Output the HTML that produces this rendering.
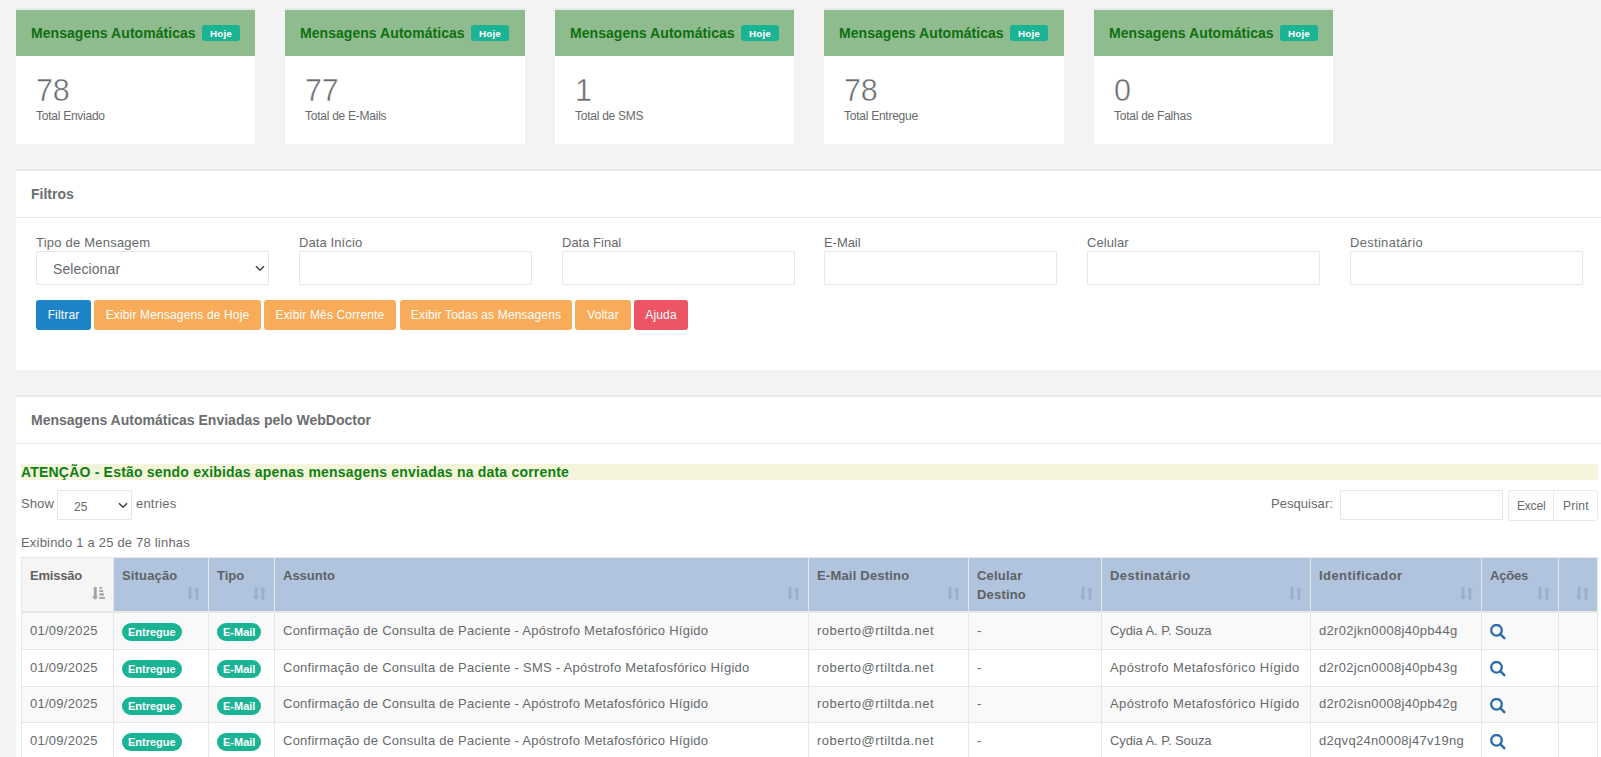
<!DOCTYPE html>
<html><head><meta charset="utf-8">
<style>
*{box-sizing:border-box}
html,body{margin:0;padding:0}
body{width:1601px;height:757px;overflow:hidden;background:#f3f3f4;position:relative;font-family:"Liberation Sans",sans-serif;color:#676a6c}
.card{position:absolute;top:8px;width:239px;height:136px;border-top:2px solid #e7eaec;background:#fff}
.card .hdr{height:46px;background:#8fbc8f;position:relative}
.card .hdr .t{position:absolute;left:15px;top:15px;font-size:14px;font-weight:bold;color:#0f700f;line-height:16px;white-space:nowrap;letter-spacing:0.05px}
.card .hdr .b{position:absolute;left:186px;top:15px;width:38px;height:16px;border-radius:3px;background:#1ab394;color:#fff;font-size:9.9px;font-weight:bold;text-align:center;line-height:18.5px;letter-spacing:0.1px}
.card .num{position:absolute;left:20px;top:64px;font-size:30.5px;line-height:32px;color:#676a6c;letter-spacing:-0.3px;-webkit-text-stroke:0.5px #fff}
.card .lbl{position:absolute;left:20px;top:100px;font-size:12px;line-height:12px;color:#676a6c;letter-spacing:-0.25px;white-space:nowrap}
.panel{position:absolute;left:16px;right:0;background:#fff;border-top:2px solid #e7eaec}
.ptitle{position:absolute;left:15px;font-size:14px;font-weight:bold;line-height:16px;white-space:nowrap;color:#6b6e70}
.sep{position:absolute;left:0;right:0;height:1px;background:#e7eaec}
.lab{position:absolute;top:64px;font-size:13px;line-height:16px;letter-spacing:0.3px;white-space:nowrap}
.inp{position:absolute;top:80px;width:233px;height:34px;border:1px solid #e5e6e7;border-radius:1px;background:#fff}
.btn{position:absolute;top:129px;height:30px;border-radius:3px;color:#fff;font-size:12px;line-height:30px;text-align:center;white-space:nowrap;letter-spacing:0.15px}
.chev{position:absolute}
table{position:absolute;left:5px;top:160px;border-collapse:collapse;table-layout:fixed;font-size:13px;letter-spacing:0.3px}
th,td{border:1px solid #e7e7e7;padding:0 8px;white-space:nowrap;overflow:hidden;text-align:left;vertical-align:top}
th{background:#b0c4de;font-weight:bold;height:54px;padding-top:8px;line-height:19px;position:relative;color:#5f6264;letter-spacing:0.2px;border-color:#e7e7e7 #e7e7e7 #e7e7e7 #e7e7e7}
thead tr{border-bottom:2px solid #e7e7e7}
td{height:36.75px;line-height:18px;vertical-align:middle}
tbody tr:nth-child(1) td{height:37.8px}
tbody tr:nth-child(2) td{height:37px}
tbody tr:nth-child(3) td{height:36.2px}
tbody tr:nth-child(odd) td{background:#f9f9f9}
.badge{display:inline-block;height:18px;line-height:18px;border-radius:9px;background:#1ab394;color:#fff;font-size:11px;font-weight:bold;padding:0 6px;letter-spacing:0;vertical-align:middle;position:relative;top:1px}
.si{position:absolute;right:8px;top:29px}
</style></head>
<body>
<div class="card" style="left:16px;width:239px"><div class="hdr"><span class="t">Mensagens Automáticas</span><span class="b">Hoje</span></div><span class="num">78</span><span class="lbl">Total Enviado</span></div>
<div class="card" style="left:285px;width:240px"><div class="hdr"><span class="t">Mensagens Automáticas</span><span class="b">Hoje</span></div><span class="num">77</span><span class="lbl">Total de E-Mails</span></div>
<div class="card" style="left:555px;width:239px"><div class="hdr"><span class="t">Mensagens Automáticas</span><span class="b">Hoje</span></div><span class="num">1</span><span class="lbl">Total de SMS</span></div>
<div class="card" style="left:824px;width:240px"><div class="hdr"><span class="t">Mensagens Automáticas</span><span class="b">Hoje</span></div><span class="num">78</span><span class="lbl">Total Entregue</span></div>
<div class="card" style="left:1094px;width:239px"><div class="hdr"><span class="t">Mensagens Automáticas</span><span class="b">Hoje</span></div><span class="num">0</span><span class="lbl">Total de Falhas</span></div>
<div class="panel" style="top:169px;height:201px">
<span class="ptitle" style="top:15px">Filtros</span>
<div class="sep" style="top:46px"></div>
<span class="lab" style="left:20px;letter-spacing:0.22px">Tipo de Mensagem</span><div class="inp" style="left:20px"></div>
<span class="lab" style="left:283px;letter-spacing:0.1px">Data Início</span><div class="inp" style="left:283px"></div>
<span class="lab" style="left:546px;letter-spacing:0px">Data Final</span><div class="inp" style="left:546px"></div>
<span class="lab" style="left:808px;letter-spacing:-0.05px">E-Mail</span><div class="inp" style="left:808px"></div>
<span class="lab" style="left:1071px;letter-spacing:0.07px">Celular</span><div class="inp" style="left:1071px"></div>
<span class="lab" style="left:1334px;letter-spacing:0.3px">Destinatário</span><div class="inp" style="left:1334px"></div>
<span style="position:absolute;left:37px;top:90px;font-size:14px;line-height:16px;letter-spacing:0.1px">Selecionar</span><svg class="chev" style="left:239px;top:94px" width="10" height="7" viewBox="0 0 10 7"><path d="M1 1.2 L5 5.2 L9 1.2" fill="none" stroke="#444" stroke-width="1.6"/></svg>
<div class="btn" style="left:20px;width:55px;background:#1c84c6">Filtrar</div>
<div class="btn" style="left:78px;width:167px;background:#f8ac59">Exibir Mensagens de Hoje</div>
<div class="btn" style="left:248px;width:132px;background:#f8ac59">Exibir Mês Corrente</div>
<div class="btn" style="left:384px;width:172px;background:#f8ac59">Exibir Todas as Mensagens</div>
<div class="btn" style="left:559px;width:56px;background:#f8ac59">Voltar</div>
<div class="btn" style="left:618px;width:54px;background:#ed5565">Ajuda</div>
</div>
<div class="panel" style="top:395px;height:400px">
<span class="ptitle" style="top:15px">Mensagens Automáticas Enviadas pelo WebDoctor</span>
<div class="sep" style="top:46px"></div>
<div style="position:absolute;left:5px;top:67px;width:1577px;height:16px;background:#f5f5dc"></div><span style="position:absolute;left:5px;top:67px;font-size:14px;font-weight:bold;line-height:16px;color:#0e8012;letter-spacing:0.2px;white-space:nowrap">ATENÇÃO - Estão sendo exibidas apenas mensagens enviadas na data corrente</span>
<span style="position:absolute;left:5px;top:99px;font-size:13px;line-height:16px;letter-spacing:0.1px">Show</span><div class="inp" style="left:41px;top:93px;width:75px;height:30px"></div><span style="position:absolute;left:58px;top:102px;font-size:12px;line-height:16px">25</span><svg class="chev" style="left:102px;top:105px" width="10" height="7" viewBox="0 0 10 7"><path d="M1 1.2 L5 5.2 L9 1.2" fill="none" stroke="#444" stroke-width="1.6"/></svg>
<span style="position:absolute;left:120px;top:99px;font-size:13px;line-height:16px;letter-spacing:0.2px">entries</span><span style="position:absolute;left:1255px;top:99px;font-size:13px;line-height:16px;letter-spacing:0.05px">Pesquisar:</span><div class="inp" style="left:1324px;top:93px;width:163px;height:30px"></div><div style="position:absolute;left:1492px;top:93px;width:90px;height:31px;border:1px solid #e7eaec;border-radius:3px;background:#fff"></div><div style="position:absolute;left:1537px;top:93px;width:1px;height:31px;background:#e7eaec"></div><span style="position:absolute;left:1501px;top:101px;font-size:12px;line-height:16px;letter-spacing:-0.2px">Excel</span><span style="position:absolute;left:1547px;top:101px;font-size:12px;line-height:16px;letter-spacing:0.2px">Print</span>
<span style="position:absolute;left:5px;top:138px;font-size:13px;line-height:16px;letter-spacing:0.2px">Exibindo 1 a 25 de 78 linhas</span>
<table><colgroup><col style="width:92px"><col style="width:95px"><col style="width:66px"><col style="width:534px"><col style="width:160px"><col style="width:133px"><col style="width:209px"><col style="width:171px"><col style="width:77px"><col style="width:39px"></colgroup>
<thead><tr><th style="letter-spacing:-0.2px;background:#f5f5f5">Emissão<svg class="si" width="13" height="13" viewBox="0 0 13 13"><g fill="#a4a4a4"><path d="M1.8 0H4.7V9.4H6.2L3.25 12.8L0 9.4H1.8Z"/><rect x="7.3" y="0" width="2.7" height="1.8"/><rect x="7.3" y="3.1" width="3.8" height="1.9"/><rect x="7.3" y="6.3" width="4.6" height="2.3"/><rect x="7.3" y="10.1" width="5.8" height="1.9"/></g></svg></th><th style="letter-spacing:0.16px">Situação<svg class="si" width="13" height="13" viewBox="0 0 13 13"><g fill="#9dafc8"><path d="M1.6 0H4.5V9.2H6.3L3.05 12.8L-0.2 9.2H1.6Z"/><path d="M8.6 12.8H11.2V3.5H12.9L9.9 0L6.7 3.5H8.6Z"/></g></svg></th><th style="letter-spacing:0px">Tipo<svg class="si" width="13" height="13" viewBox="0 0 13 13"><g fill="#9dafc8"><path d="M1.6 0H4.5V9.2H6.3L3.05 12.8L-0.2 9.2H1.6Z"/><path d="M8.6 12.8H11.2V3.5H12.9L9.9 0L6.7 3.5H8.6Z"/></g></svg></th><th style="letter-spacing:0px">Assunto<svg class="si" width="13" height="13" viewBox="0 0 13 13"><g fill="#9dafc8"><path d="M1.6 0H4.5V9.2H6.3L3.05 12.8L-0.2 9.2H1.6Z"/><path d="M8.6 12.8H11.2V3.5H12.9L9.9 0L6.7 3.5H8.6Z"/></g></svg></th><th style="letter-spacing:0.2px">E-Mail Destino<svg class="si" width="13" height="13" viewBox="0 0 13 13"><g fill="#9dafc8"><path d="M1.6 0H4.5V9.2H6.3L3.05 12.8L-0.2 9.2H1.6Z"/><path d="M8.6 12.8H11.2V3.5H12.9L9.9 0L6.7 3.5H8.6Z"/></g></svg></th><th style="letter-spacing:0.19px">Celular<br>Destino<svg class="si" width="13" height="13" viewBox="0 0 13 13"><g fill="#9dafc8"><path d="M1.6 0H4.5V9.2H6.3L3.05 12.8L-0.2 9.2H1.6Z"/><path d="M8.6 12.8H11.2V3.5H12.9L9.9 0L6.7 3.5H8.6Z"/></g></svg></th><th style="letter-spacing:0.45px">Destinatário<svg class="si" width="13" height="13" viewBox="0 0 13 13"><g fill="#9dafc8"><path d="M1.6 0H4.5V9.2H6.3L3.05 12.8L-0.2 9.2H1.6Z"/><path d="M8.6 12.8H11.2V3.5H12.9L9.9 0L6.7 3.5H8.6Z"/></g></svg></th><th style="letter-spacing:0.42px">Identificador<svg class="si" width="13" height="13" viewBox="0 0 13 13"><g fill="#9dafc8"><path d="M1.6 0H4.5V9.2H6.3L3.05 12.8L-0.2 9.2H1.6Z"/><path d="M8.6 12.8H11.2V3.5H12.9L9.9 0L6.7 3.5H8.6Z"/></g></svg></th><th style="letter-spacing:-0.2px">Ações<svg class="si" width="13" height="13" viewBox="0 0 13 13"><g fill="#9dafc8"><path d="M1.6 0H4.5V9.2H6.3L3.05 12.8L-0.2 9.2H1.6Z"/><path d="M8.6 12.8H11.2V3.5H12.9L9.9 0L6.7 3.5H8.6Z"/></g></svg></th><th style="letter-spacing:0px"><svg class="si" width="13" height="13" viewBox="0 0 13 13"><g fill="#9dafc8"><path d="M1.6 0H4.5V9.2H6.3L3.05 12.8L-0.2 9.2H1.6Z"/><path d="M8.6 12.8H11.2V3.5H12.9L9.9 0L6.7 3.5H8.6Z"/></g></svg></th></tr></thead>
<tbody>
<tr><td style="letter-spacing:0.26px">01/09/2025</td><td><span class="badge">Entregue</span></td><td><span class="badge">E-Mail</span></td><td style="letter-spacing:0.25px">Confirmação de Consulta de Paciente - Apóstrofo Metafosfórico Hígido</td><td style="letter-spacing:0.48px">roberto@rtiltda.net</td><td>-</td><td style="letter-spacing:-0.1px">Cydia A. P. Souza</td><td style="letter-spacing:0.31px">d2r02jkn0008j40pb44g</td><td><svg width="16" height="16" viewBox="0 0 16 16" style="vertical-align:middle;position:relative;top:1px"><circle cx="6.5" cy="6.3" r="5.3" fill="none" stroke="#2c6dab" stroke-width="2.3"/><path d="M10.3 10.1 L14.3 14.1" stroke="#2c6dab" stroke-width="2.5" stroke-linecap="round"/></svg></td><td></td></tr>
<tr><td style="letter-spacing:0.26px">01/09/2025</td><td><span class="badge">Entregue</span></td><td><span class="badge">E-Mail</span></td><td style="letter-spacing:0.25px">Confirmação de Consulta de Paciente - SMS - Apóstrofo Metafosfórico Hígido</td><td style="letter-spacing:0.48px">roberto@rtiltda.net</td><td>-</td><td style="letter-spacing:0.37px">Apóstrofo Metafosfórico Hígido</td><td style="letter-spacing:0.31px">d2r02jcn0008j40pb43g</td><td><svg width="16" height="16" viewBox="0 0 16 16" style="vertical-align:middle;position:relative;top:1px"><circle cx="6.5" cy="6.3" r="5.3" fill="none" stroke="#2c6dab" stroke-width="2.3"/><path d="M10.3 10.1 L14.3 14.1" stroke="#2c6dab" stroke-width="2.5" stroke-linecap="round"/></svg></td><td></td></tr>
<tr><td style="letter-spacing:0.26px">01/09/2025</td><td><span class="badge">Entregue</span></td><td><span class="badge">E-Mail</span></td><td style="letter-spacing:0.25px">Confirmação de Consulta de Paciente - Apóstrofo Metafosfórico Hígido</td><td style="letter-spacing:0.48px">roberto@rtiltda.net</td><td>-</td><td style="letter-spacing:0.37px">Apóstrofo Metafosfórico Hígido</td><td style="letter-spacing:0.31px">d2r02isn0008j40pb42g</td><td><svg width="16" height="16" viewBox="0 0 16 16" style="vertical-align:middle;position:relative;top:1px"><circle cx="6.5" cy="6.3" r="5.3" fill="none" stroke="#2c6dab" stroke-width="2.3"/><path d="M10.3 10.1 L14.3 14.1" stroke="#2c6dab" stroke-width="2.5" stroke-linecap="round"/></svg></td><td></td></tr>
<tr><td style="letter-spacing:0.26px">01/09/2025</td><td><span class="badge">Entregue</span></td><td><span class="badge">E-Mail</span></td><td style="letter-spacing:0.25px">Confirmação de Consulta de Paciente - Apóstrofo Metafosfórico Hígido</td><td style="letter-spacing:0.48px">roberto@rtiltda.net</td><td>-</td><td style="letter-spacing:-0.1px">Cydia A. P. Souza</td><td style="letter-spacing:0.31px">d2qvq24n0008j47v19ng</td><td><svg width="16" height="16" viewBox="0 0 16 16" style="vertical-align:middle;position:relative;top:1px"><circle cx="6.5" cy="6.3" r="5.3" fill="none" stroke="#2c6dab" stroke-width="2.3"/><path d="M10.3 10.1 L14.3 14.1" stroke="#2c6dab" stroke-width="2.5" stroke-linecap="round"/></svg></td><td></td></tr>
</tbody></table>
</div>
</body></html>
